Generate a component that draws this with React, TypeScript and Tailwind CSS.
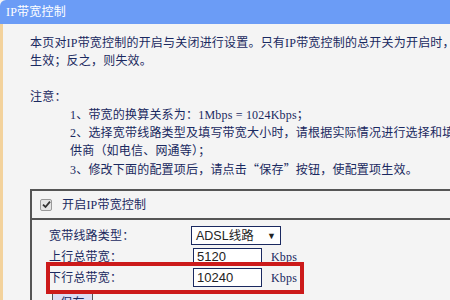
import React from "react";

function CheckBox() {
	return (
		<div className="w-[12px] h-[12px] rounded-[2px] border border-[#9a9a9a] bg-[#e4e4e4] flex items-center justify-center">
			<svg width="9" height="9" viewBox="0 0 9 9">
				<path d="M1 4.6 L3.5 7 L8 1.6" fill="none" stroke="#333" strokeWidth="1.8" />
			</svg>
		</div>
	);
}

function App() {
	return (
		<div
			className="relative w-[450px] h-[300px] overflow-hidden bg-[#f4f4f4] text-[#1a2960] text-[12px] tracking-[0.2px] leading-[18px]"
			style={{ fontFamily: '"Liberation Serif", "Noto Sans CJK SC", serif' }}
		>
			{/* title bar */}
			<div className="h-[24px] bg-[#6b9cf6] rounded-tl-[6px] pl-[6px] flex items-center text-white text-[12px]">
				IP带宽控制
			</div>

			{/* body */}
			<div className="h-[276px] border-l-[3px] border-[#f3d29c] pl-[27px] pt-[10px] w-[700px]">
				<p className="whitespace-nowrap">
					本页对IP带宽控制的开启与关闭进行设置。只有IP带宽控制的总开关为开启时，后续的设置才能够
				</p>
				<p className="whitespace-nowrap">生效；反之，则失效。</p>
				<p className="h-[18px]"></p>
				<p>注意：</p>
				<div className="pl-[40px] whitespace-nowrap">
					<p>1、带宽的换算关系为：1Mbps = 1024Kbps；</p>
					<p>
						2、选择宽带线路类型及填写带宽大小时，请根据实际情况进行选择和填写，如不清楚，请咨询您的带宽提
					</p>
					<p>供商（如电信、网通等）；</p>
					<p>
						3、修改下面的配置项后，请点击
						<span style={{ fontFamily: '"Noto Sans CJK SC", sans-serif' }}>“</span>
						保存
						<span style={{ fontFamily: '"Noto Sans CJK SC", sans-serif' }}>”</span>
						按钮，使配置项生效。
					</p>
				</div>

				{/* settings box */}
				<div className="mt-[10px] border-t-2 border-l-2 border-[#555]">
					<div className="h-[29px] flex items-center gap-[10px] pl-[8px] border-b-2 border-[#555]">
						<CheckBox />
						<span>开启IP带宽控制</span>
					</div>
					<div className="pl-[17px] pt-[5px]">
						<div className="h-[21px] flex items-center">
							<span className="w-[142px]">宽带线路类型：</span>
							<div
								className="w-[90px] h-[19px] bg-white border border-[#1a2960] flex items-center justify-between pl-[4px] pr-[4px] text-[12.5px] text-[#222]"
								style={{ fontFamily: '"Liberation Sans", "Noto Sans CJK SC", sans-serif' }}
							>
								<span className="tracking-normal">ADSL线路</span>
								<span className="text-[9px]">▼</span>
							</div>
						</div>
						<div className="h-[21px] flex items-center">
							<span className="w-[144px]">上行总带宽：</span>
							<div
								className="w-[69px] h-[18px] bg-white border border-[#1a2960] flex items-center pl-[3px] text-[13px] text-[#222] tracking-normal"
								style={{ fontFamily: '"Liberation Sans", sans-serif' }}
							>
								5120
							</div>
							<span className="ml-[9px]">Kbps</span>
						</div>
						<div className="h-[21px] flex items-center">
							<span className="w-[144px]">下行总带宽：</span>
							<div
								className="w-[69px] h-[19px] bg-white border border-[#1a2960] flex items-center pl-[3px] text-[13px] text-[#222] tracking-normal"
								style={{ fontFamily: '"Liberation Sans", sans-serif' }}
							>
								10240
							</div>
							<span className="ml-[9px]">Kbps</span>
						</div>
						<button className="mt-[5px] ml-[3px] w-[41px] h-[20px] bg-[#dcdcf4] border border-[#555] text-[#1a2960] leading-[18px]">
							保存
						</button>
					</div>
				</div>
			</div>

			{/* red highlight */}
			<div className="absolute left-[46px] top-[262px] w-[258px] h-[32px] border-4 border-[#cc1a1a]"></div>
		</div>
	);
}

export default App;
